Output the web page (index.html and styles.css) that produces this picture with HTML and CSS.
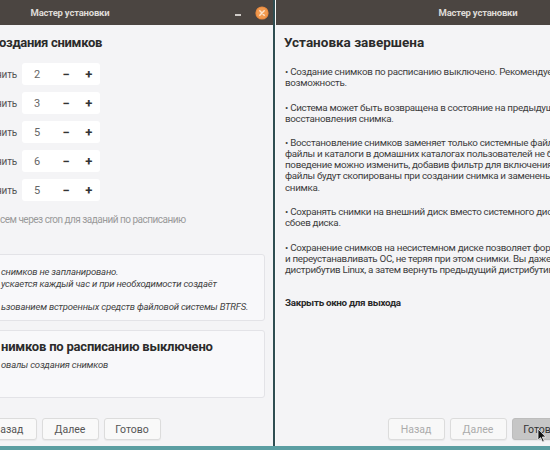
FILE: index.html
```html
<!DOCTYPE html>
<html lang="ru">
<head>
<meta charset="utf-8">
<title>Мастер установки</title>
<link rel="stylesheet" href="styles.css">
</head>
<body>
<div class="desktop">
  <section class="window win-left">
    <header class="titlebar">
      <span></span>
      <span class="title">Мастер установки</span>
      <span class="wm">
        <span class="wm-min"></span>
        <span class="wm-close">
          <svg width="14" height="14" viewBox="0 0 14 14"><circle cx="7" cy="7" r="6.6" fill="#e8883e"/><circle cx="7" cy="7" r="5.6" fill="#f19a4f"/><path d="M4.8 4.8 L9.2 9.2 M9.2 4.8 L4.8 9.2" stroke="#fbe3cc" stroke-width="1.5" stroke-linecap="round"/></svg>
        </span>
      </span>
    </header>
    <div class="win-body left-body">
      <h1 class="page-title page-title-left">оздания снимков</h1>
      <div class="levels">
        <div class="level"><span class="level-label">нить</span><div class="spin"><span class="spin-val">2</span><span class="spin-btn">−</span><span class="spin-btn">+</span></div></div>
        <div class="level"><span class="level-label">нить</span><div class="spin"><span class="spin-val">3</span><span class="spin-btn">−</span><span class="spin-btn">+</span></div></div>
        <div class="level"><span class="level-label">нить</span><div class="spin"><span class="spin-val">5</span><span class="spin-btn">−</span><span class="spin-btn">+</span></div></div>
        <div class="level"><span class="level-label">нить</span><div class="spin"><span class="spin-val">6</span><span class="spin-btn">−</span><span class="spin-btn">+</span></div></div>
        <div class="level"><span class="level-label">нить</span><div class="spin"><span class="spin-val">5</span><span class="spin-btn">−</span><span class="spin-btn">+</span></div></div>
      </div>
      <p class="hint">сем через cron для заданий по расписанию</p>
      <div class="frame frame-info">
        <p class="note">снимков не запланировано.</p>
        <p class="note">ускается каждый час и при необходимости создаёт</p>
        <p class="note">&nbsp;</p>
        <p class="note">ьзованием встроенных средств файловой системы BTRFS.</p>
      </div>
      <div class="frame frame-status">
        <h2 class="status-title">нимков по расписанию выключено</h2>
        <p class="note">овалы создания снимков</p>
      </div>
    </div>
    <footer class="actions">
      <button class="btn">Назад</button>
      <button class="btn">Далее</button>
      <button class="btn">Готово</button>
    </footer>
  </section>

  <section class="window win-right">
    <header class="titlebar">
      <span></span>
      <span class="title">Мастер установки</span>
      <span></span>
    </header>
    <div class="win-body right-body">
      <h1 class="page-title">Установка завершена</h1>
      <p class="para">• Создание снимков по расписанию выключено. Рекомендуется включить эту<br>возможность.</p>
      <p class="para">• Система может быть возвращена в состояние на предыдущую дату с помощью<br>восстановления снимка.</p>
      <p class="para">• Восстановление снимков заменяет только системные файлы и настройки. Личные<br>файлы и каталоги в домашних каталогах пользователей не будут затронуты. Это<br>поведение можно изменить, добавив фильтр для включения этих каталогов. Эти<br>файлы будут скопированы при создании снимка и заменены при восстановлении<br>снимка.</p>
      <p class="para">• Сохранять снимки на внешний диск вместо системного диска для защиты от<br>сбоев диска.</p>
      <p class="para">• Сохранение снимков на несистемном диске позволяет форматировать диск<br>и переустанавливать ОС, не теряя при этом снимки. Вы даже можете установить<br>дистрибутив Linux, а затем вернуть предыдущий дистрибутив, восстановив снимок.</p>
      <p class="para para-strong">Закрыть окно для выхода</p>
    </div>
    <footer class="actions">
      <button class="btn btn-disabled">Назад</button>
      <button class="btn btn-disabled">Далее</button>
      <button class="btn btn-hover">Готово</button>
    </footer>
  </section>

  <svg class="cursor" width="10" height="15" viewBox="0 0 10 15"><path d="M1 1 L1 12 L3.6 9.6 L5.6 14 L7.2 13.3 L5.3 9 L8.8 9 Z" fill="#111" stroke="#eee" stroke-width="0.8"/></svg>
</div>
</body>
</html>
```

FILE: styles.css
```css
* { box-sizing: border-box; }

html, body {
  margin: 0;
  padding: 0;
}

body {
  width: 550px;
  height: 450px;
  overflow: hidden;
  font-family: Roboto, "Noto Sans", sans-serif;
  color: #3a3a3a;
}

.desktop {
  position: relative;
  width: 550px;
  height: 450px;
  background: #5b9ea2;
  overflow: hidden;
}

.window {
  position: absolute;
  top: 0;
  height: 446px;
  background: #f4f4f6;
  display: flex;
  flex-direction: column;
}

.win-left {
  left: -133px;
  width: 406px;
  box-shadow: 1px 0 0 #2f4e52;
}

.win-right {
  left: 275px;
  width: 405px;
  border-left: 1px solid #fafafa;
  box-shadow: -1px 0 0 #2f4e52;
}

.titlebar {
  height: 25px;
  flex: none;
  background: #4b4541;
  display: grid;
  grid-template-columns: 1fr auto 1fr;
  align-items: center;
}

.title {
  font-size: 9.5px;
  font-weight: bold;
  color: #dedbd7;
  letter-spacing: -0.2px;
}

.wm {
  justify-self: end;
  display: flex;
  align-items: center;
  gap: 14px;
  padding-right: 4px;
}

.wm-min {
  width: 6px;
  height: 2px;
  background: #cfcbc7;
  margin-top: 4px;
}

.wm-close {
  display: flex;
  width: 14px;
  height: 14px;
}

.win-body {
  flex: 1;
  display: flex;
  flex-direction: column;
}

.left-body {
  padding: 0 8px 0 133px;
}

.right-body {
  padding: 0 10px 0 9px;
}

.page-title {
  margin: 8px 0 0 -1px;
  font-size: 13.5px;
  line-height: 18px;
  font-weight: bold;
  color: #2b2b2b;
  white-space: nowrap;
}

.page-title-left {
  margin-top: 9px;
  font-size: 13px;
  letter-spacing: -0.3px;
}

.levels {
  margin-top: 11px;
  display: flex;
  flex-direction: column;
  gap: 7px;
}

.level {
  display: flex;
  align-items: center;
  gap: 5px;
}

.level-label {
  width: 17px;
  text-align: right;
  font-size: 10px;
  letter-spacing: -0.2px;
  color: #555;
  white-space: nowrap;
  direction: rtl;
}

.spin {
  width: 78px;
  height: 22px;
  background: #fff;
  border-radius: 3px;
  display: flex;
  align-items: center;
  font-size: 11px;
}

.spin-val {
  width: 33px;
  padding-left: 12px;
  color: #666;
}

.spin-btn {
  width: 23px;
  text-align: center;
  font-weight: bold;
  font-size: 13px;
  color: #333;
}

.hint {
  margin: 12px 0 0;
  font-size: 10px;
  letter-spacing: -0.5px;
  line-height: 13px;
  color: #9a9a9a;
  white-space: nowrap;
}

.frame {
  background: #f8f8fa;
  border: 1px solid #e3e3e7;
  border-radius: 3px;
  margin-left: -6px;
  padding-left: 6px;
}

.frame-info {
  margin-top: 28px;
  padding-top: 11px;
  padding-bottom: 8px;
}

.frame-status {
  margin-top: 9px;
  height: 68px;
  padding-top: 7px;
}

.note {
  margin: 0;
  font-size: 9.5px;
  letter-spacing: -0.2px;
  line-height: 11.5px;
  font-style: italic;
  color: #444;
  white-space: nowrap;
}

.status-title {
  margin: 0 0 3px;
  font-size: 13px;
  letter-spacing: -0.2px;
  line-height: 18px;
  font-weight: bold;
  color: #2b2b2b;
  white-space: nowrap;
}

.para {
  margin: 13.4px 0 0;
  font-size: 9.8px;
  letter-spacing: -0.3px;
  line-height: 11.1px;
  color: #3d3d3d;
  white-space: nowrap;
}

.page-title + .para {
  margin-top: 15px;
}

.para-strong {
  margin-top: 22px;
  font-weight: bold;
  color: #2b2b2b;
}

.actions {
  flex: none;
  display: flex;
  justify-content: center;
  gap: 5px;
  padding-bottom: 6px;
}

.btn {
  width: 57px;
  height: 22px;
  font-family: Roboto, "Noto Sans", sans-serif;
  font-size: 10.5px;
  color: #555;
  background: #f9f9f9;
  border: 1px solid #dcdcdc;
  border-radius: 3px;
  box-shadow: 0 1px 1px rgba(0,0,0,0.05);
  padding: 0;
}

.btn-disabled {
  color: #ababab;
  background: #f8f8f8;
}

.btn-hover {
  background: #c6c6c6;
  border-color: #bdbdbd;
  color: #333;
}

.cursor {
  position: absolute;
  left: 537px;
  top: 428px;
}
```
